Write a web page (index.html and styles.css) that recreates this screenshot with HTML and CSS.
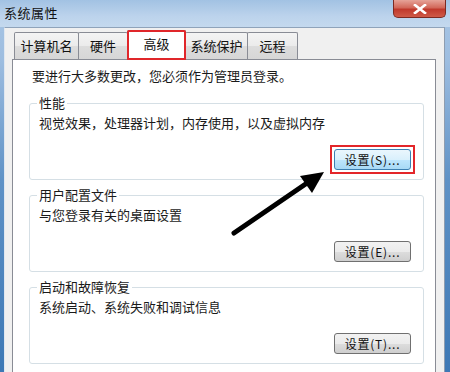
FILE: index.html
```html
<!DOCTYPE html>
<html lang="zh-CN">
<head>
<meta charset="utf-8">
<title>系统属性</title>
<link rel="stylesheet" href="styles.css">
</head>
<body>
<div class="window">
  <div class="titlebar">
    <span class="title">系统属性</span>
    <div class="close">
      <svg width="16" height="10" viewBox="0 0 16 10"><path d="M3 1 L13 9 M13 1 L3 9" stroke="#fff" stroke-width="2.6" stroke-linecap="square"/></svg>
    </div>
  </div>
  <div class="frame">
    <div class="tabs">
      <div class="tab t1">计算机名</div>
      <div class="tab t2">硬件</div>
      <div class="tab active t3">高级</div>
      <div class="tab t4">系统保护</div>
      <div class="tab t5">远程</div>
    </div>
    <div class="page">
      <p class="intro">要进行大多数更改，您必须作为管理员登录。</p>
      <fieldset class="group first">
        <legend>性能</legend>
        <p class="desc">视觉效果，处理器计划，内存使用，以及虚拟内存</p>
        <div class="btnrow"><span class="mark"><button class="btn focus">设置(S)...</button></span></div>
      </fieldset>
      <fieldset class="group">
        <legend>用户配置文件</legend>
        <p class="desc">与您登录有关的桌面设置</p>
        <div class="btnrow"><button class="btn">设置(E)...</button></div>
      </fieldset>
      <fieldset class="group">
        <legend>启动和故障恢复</legend>
        <p class="desc">系统启动、系统失败和调试信息</p>
        <div class="btnrow"><button class="btn">设置(T)...</button></div>
      </fieldset>
    </div>
  </div>
  <svg class="arrow" width="450" height="372" viewBox="0 0 450 372">
    <line x1="234" y1="233" x2="310" y2="181" stroke="#000" stroke-width="5" stroke-linecap="round"/>
    <polygon points="324,172 300,176 312,193" fill="#000"/>
  </svg>
</div>
</body>
</html>
```
FILE: styles.css
```css
* { box-sizing: border-box; }
html, body { margin: 0; padding: 0; }
body {
  font-family: "Noto Sans CJK SC", "Noto Sans", sans-serif;
  font-size: 13px;
  color: #1a1a1a;
  background: #fff;
}
.window {
  position: relative;
  width: 450px;
  height: 372px;
  overflow: hidden;
  background: linear-gradient(to bottom, #a9c6e4 0px, #9dbde0 60px, #5f92c6 180px, #3d78b5 372px);
}
.titlebar {
  height: 27px;
  display: flex;
  align-items: flex-start;
  padding-left: 4px;
  background: linear-gradient(to bottom, #a2c2e3 0%, #bcd3ec 60%, #c4d9ee 100%);
}
.title {
  margin-top: 4px;
  font-size: 13px;
  line-height: 18px;
  letter-spacing: 0.5px;
  color: #111;
}
.close {
  margin-left: auto;
  margin-right: 4px;
  width: 53px;
  height: 18px;
  border: 1px solid #7c2a22;
  border-top: none;
  border-radius: 0 0 5px 5px;
  background: linear-gradient(to bottom, #e6a398 0%, #d2685a 45%, #c0392c 55%, #cf5a48 100%);
  display: flex;
  align-items: center;
  justify-content: center;
}
.frame {
  margin: 0 5px 0 4px;
  height: 345px;
  background: #f0f0f0;
  border-top: 1px solid #8fa3ba;
  border-left: 1px solid #dfe7f0;
  border-right: 1px solid #8e9db0;
  padding: 2px 8px 0 7px;
}
.tabs {
  display: flex;
  align-items: flex-end;
  margin-left: 2px;
  height: 29px;
}
.tab {
  height: 27px;
  border: 1px solid #898c95;
  border-bottom: none;
  border-radius: 2px 2px 0 0;
  background: linear-gradient(to bottom, #f4f4f4 0%, #ebebeb 50%, #dddddd 51%, #d6d6d6 100%);
  font-size: 13px;
  line-height: 26px;
  text-align: center;
  margin-left: -1px;
  color: #111;
}
.t1 { width: 65px; margin-left: 0; }
.t2 { width: 50px; }
.t3 { width: 59px; }
.t4 { width: 63px; }
.t5 { width: 51px; }
.tab.active {
  position: relative;
  background: #fff;
  line-height: 26px;
  outline: 2px solid #e0262a;
  outline-offset: -2px;
  z-index: 1;
  margin-bottom: -1px;
  height: 30px;
}
.page {
  height: 320px;
  background: #fff;
  border: 1px solid #898c95;
  padding: 8px 11px 0 16px;
}
.intro {
  margin: 0;
  padding-left: 3px;
  line-height: 16px;
}
.group {
  margin: 11px 0 0 0;
  padding: 0 12px 9px 7px;
  border: 1px solid #d5dfe5;
  border-radius: 3px;
  min-width: 0;
}
.group + .group { margin-top: 7px; }
.group legend {
  padding: 0 2px;
  line-height: 16px;
  font-size: 13px;
}
.desc {
  margin: 4px 0 0 2px;
  line-height: 16px;
}
.btnrow {
  margin-top: 18px;
  display: flex;
  justify-content: flex-end;
  height: 21px;
}
.mark {
  display: flex;
  margin: -3px -3px 0 0;
  padding: 2px;
  border: 1px solid #e3262a;
  outline: 1px solid #e3262a;
  height: 27px;
}
.btn {
  width: 77px;
  height: 21px;
  padding: 0;
  font-family: "Noto Sans CJK SC", "Noto Sans", sans-serif;
  font-size: 12px;
  letter-spacing: 0.8px;
  line-height: 18px;
  color: #111;
  border: 1px solid #707070;
  border-radius: 3px;
  background: linear-gradient(to bottom, #f2f2f2 0%, #ebebeb 50%, #dddddd 51%, #cfcfcf 100%);
}
.btn.focus {
  border-color: #3c7fb1;
  background: linear-gradient(to bottom, #eaf6fd 0%, #d9f0fc 50%, #bee6fd 51%, #a7d9f5 100%);
}
.arrow {
  position: absolute;
  left: 0;
  top: 0;
  pointer-events: none;
}
```
